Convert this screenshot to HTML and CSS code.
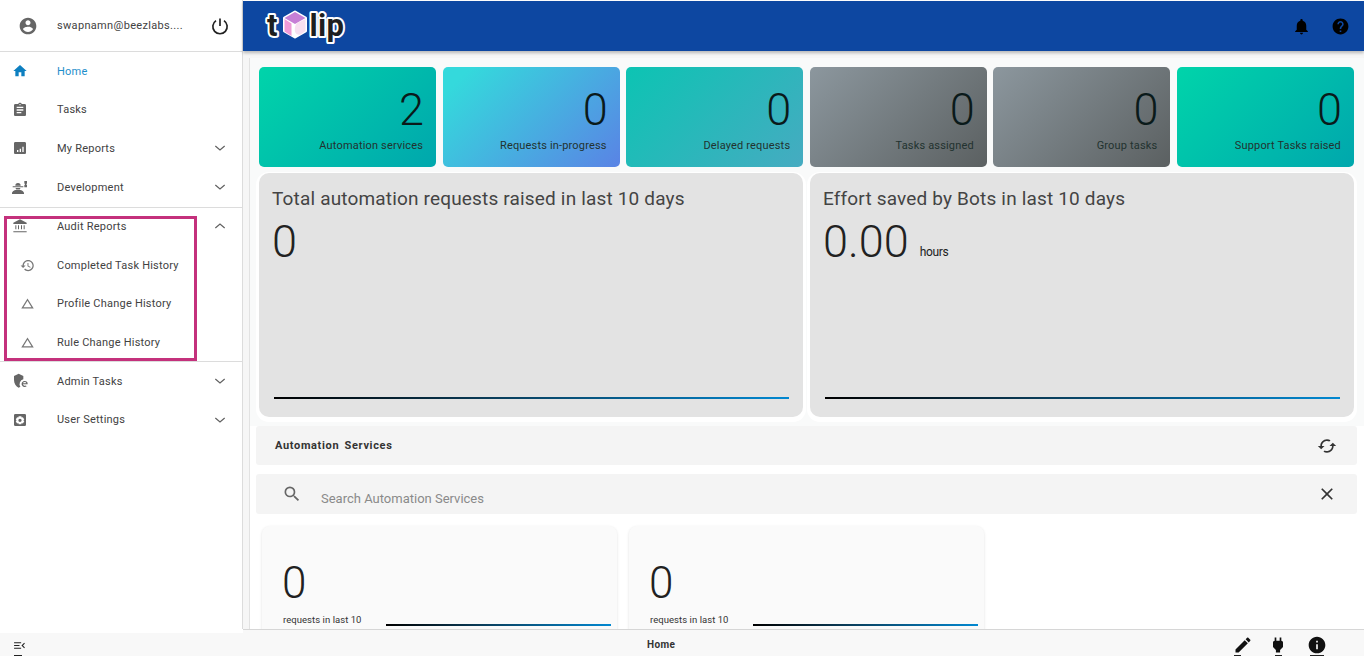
FILE: index.html
```html
<!DOCTYPE html>
<html lang="en">
<head>
<meta charset="utf-8">
<title>Tulip</title>
<link rel="stylesheet" href="styles.css">
</head>
<body>
<div class="app">
  <div class="body-row">
    <aside class="sidebar">
      <div class="user">
        <svg class="ic user-ic" viewBox="0 0 24 24"><path d="M12 2C6.48 2 2 6.48 2 12s4.48 10 10 10 10-4.48 10-10S17.52 2 12 2zm0 3c1.66 0 3 1.34 3 3s-1.34 3-3 3-3-1.34-3-3 1.34-3 3-3zm0 14.2c-2.5 0-4.71-1.28-6-3.22.03-1.99 4-3.08 6-3.08 1.99 0 5.97 1.09 6 3.08-1.29 1.94-3.5 3.22-6 3.22z"/></svg>
        <span class="user-name">swapnamn@beezlabs....</span>
        <svg class="power" viewBox="0 0 24 24"><path d="M12 3v9M7.2 5.6a8.6 8.6 0 1 0 9.6 0"/></svg>
      </div>
      <nav class="group group-main">
        <div class="row active"><svg class="ic" viewBox="0 0 24 24"><path d="M10 20v-6h4v6h5v-8h3L12 3 2 12h3v8z"/></svg><span>Home</span></div>
        <div class="row"><svg class="ic" viewBox="0 0 24 24"><path d="M19 3h-4.18C14.4 1.84 13.3 1 12 1c-1.3 0-2.4.84-2.82 2H5c-1.1 0-2 .9-2 2v14c0 1.1.9 2 2 2h14c1.1 0 2-.9 2-2V5c0-1.1-.9-2-2-2zm-7 0c.55 0 1 .45 1 1s-.45 1-1 1-1-.45-1-1 .45-1 1-1zm2 14H7v-2h7v2zm3-4H7v-2h10v2zm0-4H7V7h10v2z"/></svg><span>Tasks</span></div>
        <div class="row"><svg class="ic" viewBox="0 0 24 24"><path d="M19 3H5c-1.1 0-2 .9-2 2v14c0 1.1.9 2 2 2h14c1.1 0 2-.9 2-2V5c0-1.1-.9-2-2-2zM9.500 18h-2v-3h2v3zm4 0h-2v-5h2v5zm4 0h-2v-8h2v8z"/></svg><span>My Reports</span><svg class="chev" viewBox="0 0 24 24"><path d="M5 9l7 6 7-6"/></svg></div>
        <div class="row"><svg class="ic" viewBox="0 0 24 24"><path fill-rule="evenodd" d="M9 6a4 4 0 0 1 4 4H5a4 4 0 0 1 4-4zM1 11h16v1.500H1zM5.500 13.500h7a3.600 3.600 0 0 1-.6 1.800H6.100a3.600 3.600 0 0 1-.6-1.800zM0 21.500c0-3 4-5.300 9-5.300s9 2.300 9 5.300v1H0zM18.500 3h4v4h-1v1.500h1v4h-4v-4h1V7h-1z"/></svg><span>Development</span><svg class="chev" viewBox="0 0 24 24"><path d="M5 9l7 6 7-6"/></svg></div>
      </nav>
      <nav class="group group-audit">
        <div class="row"><svg class="ic" viewBox="0 0 24 24"><path d="M5 11h1.500v6H5zM9 11h1.500v6H9zM13.500 11H15v6h-1.500zM17.500 11H19v6h-1.500zM2 20h20v1.500H2zM12 2L2 7v2h20V7z"/></svg><span>Audit Reports</span><svg class="chev" viewBox="0 0 24 24"><path d="M5 15l7-6 7 6"/></svg></div>
        <div class="row"><svg class="ic sub" viewBox="0 0 24 24"><path d="M13 3c-4.97 0-9 4.030-9 9H1l3.890 3.890.070.140L9 12H6c0-3.870 3.130-7 7-7s7 3.130 7 7-3.130 7-7 7c-1.930 0-3.680-.790-4.940-2.060l-1.420 1.420C8.270 19.990 10.510 21 13 21c4.970 0 9-4.030 9-9s-4.030-9-9-9zm-1 5v5l4.280 2.540.720-1.210-3.500-2.080V8H12z"/></svg><span>Completed Task History</span></div>
        <div class="row"><svg class="ic sub" viewBox="0 0 24 24"><path d="M12 7.770L18.390 18H5.610L12 7.770M12 4L2 20h20L12 4z"/></svg><span>Profile Change History</span></div>
        <div class="row"><svg class="ic sub" viewBox="0 0 24 24"><path d="M12 7.770L18.390 18H5.610L12 7.770M12 4L2 20h20L12 4z"/></svg><span>Rule Change History</span></div>
      </nav>
      <nav class="group last">
        <div class="row"><svg class="ic" viewBox="0 0 24 24"><path d="M10 1L3 4.500v6c0 5.200 3 9.800 7 11.500 1-.4 1.800-1 2.600-1.700A7 7 0 0 1 17 9.500V4.500z"/><path d="M19 12a4.500 4.500 0 1 0 3 7.800l-1.200-1.200A2.800 2.800 0 0 1 16.400 17h7a4.500 4.500 0 0 0-4.400-5zm-2.600 3.500a2.700 2.700 0 0 1 5.200 0z"/></svg><span>Admin Tasks</span><svg class="chev" viewBox="0 0 24 24"><path d="M5 9l7 6 7-6"/></svg></div>
        <div class="row"><svg class="ic" viewBox="0 0 24 24"><path fill-rule="evenodd" d="M5 3h14a2 2 0 0 1 2 2v14a2 2 0 0 1-2 2H5a2 2 0 0 1-2-2V5a2 2 0 0 1 2-2zm5 3.500l-.5 1.900-1.900-.6-2 3.400 1.400 1.300-1.400 1.300 2 3.400 1.900-.6.500 1.900h4l.5-1.900 1.900.6 2-3.400-1.400-1.300 1.400-1.300-2-3.400-1.900.6-.5-1.900zM12 10a2.500 2.500 0 1 1 0 5 2.500 2.500 0 0 1 0-5z"/></svg><span>User Settings</span><svg class="chev" viewBox="0 0 24 24"><path d="M5 9l7 6 7-6"/></svg></div>
      </nav>
      <div class="highlight"></div>
    </aside>
    <main class="main">
      <header class="topbar">
        <svg class="logo" viewBox="0 0 84 42" role="img" aria-label="tulip">
          <text class="logo-t" x="5" y="31">t</text>
          <path class="logo-hex" d="M33 7l10.500 6v13L33 32l-10.500-6V13z"/>
          <path class="logo-pink" d="M33 7l10.500 6-10.500 6-10.500-6z"/>
          <path class="logo-side" d="M22.500 14l7 4.500V31l-7-4.500z"/>
          <path class="logo-side2" d="M43.500 14v12l-5 3.500c-4 1-6.500-2-5.500-7.500.5-3 2.500-5 5.500-5.500z"/>
          <text class="logo-t logo-lip" x="47.500" y="31">lip</text>
        </svg>
        <div class="top-actions">
          <svg class="tic" viewBox="0 0 24 24"><path d="M12 22c1.100 0 2-.9 2-2h-4c0 1.100.89 2 2 2zm6-6v-5c0-3.070-1.640-5.640-4.500-6.320V4c0-.83-.67-1.500-1.500-1.500s-1.500.67-1.500 1.500v.68C7.630 5.360 6 7.920 6 11v5l-2 2v1h16v-1l-2-2z"/></svg>
          <svg class="tic" viewBox="0 0 24 24"><path d="M12 2C6.480 2 2 6.480 2 12s4.480 10 10 10 10-4.480 10-10S17.520 2 12 2zm1 17h-2v-2h2v2zm2.070-7.750l-.9.920C13.450 12.900 13 13.500 13 15h-2v-.5c0-1.100.45-2.100 1.170-2.830l1.240-1.260c.37-.36.59-.86.59-1.410 0-1.100-.9-2-2-2s-2 .9-2 2H8c0-2.210 1.790-4 4-4s4 1.790 4 4c0 .88-.36 1.680-.93 2.250z"/></svg>
        </div>
      </header>
      <div class="gutter">
        <div class="content">
          <section class="upper">
            <div class="stats">
              <div class="stat s-teal"><div class="stat-num">2</div><div class="stat-label">Automation services</div></div>
              <div class="stat s-blue"><div class="stat-num">0</div><div class="stat-label">Requests in-progress</div></div>
              <div class="stat s-cyan"><div class="stat-num">0</div><div class="stat-label">Delayed requests</div></div>
              <div class="stat s-gray"><div class="stat-num">0</div><div class="stat-label">Tasks assigned</div></div>
              <div class="stat s-gray"><div class="stat-num">0</div><div class="stat-label">Group tasks</div></div>
              <div class="stat s-teal"><div class="stat-num">0</div><div class="stat-label">Support Tasks raised</div></div>
            </div>
            <div class="panels">
              <div class="panel">
                <h2 class="panel-title">Total automation requests raised in last 10 days</h2>
                <div class="panel-num">0</div>
                <div class="spark panel-spark"></div>
              </div>
              <div class="panel">
                <h2 class="panel-title">Effort saved by Bots in last 10 days</h2>
                <div class="panel-num">0.00<span class="unit">hours</span></div>
                <div class="spark panel-spark"></div>
              </div>
            </div>
          </section>
          <div class="bar title-bar">
            <span class="bar-title">Automation Services</span>
            <svg class="sync" viewBox="0 0 24 24"><path transform="rotate(90 12 12)" d="M12 4V1L8 5l4 4V6c3.310 0 6 2.690 6 6 0 1.010-.25 1.970-.7 2.800l1.460 1.460C19.540 15.030 20 13.570 20 12c0-4.420-3.580-8-8-8zm0 14c-3.310 0-6-2.690-6-6 0-1.010.25-1.970.7-2.800L5.240 7.740C4.460 8.970 4 10.430 4 12c0 4.420 3.580 8 8 8v3l4-4-4-4v3z"/></svg>
          </div>
          <div class="bar search-bar">
            <svg class="search-ic" viewBox="0 0 24 24"><path d="M15.500 14h-.79l-.28-.27A6.470 6.470 0 0 0 16 9.500 6.500 6.500 0 1 0 9.500 16c1.610 0 3.090-.59 4.230-1.570l.27.28v.79l5 4.990L20.490 19l-4.990-5zm-6 0C7.010 14 5 11.990 5 9.500S7.010 5 9.500 5 14 7.010 14 9.500 11.990 14 9.500 14z"/></svg>
            <span class="search-text">Search Automation Services</span>
            <svg class="close" viewBox="0 0 24 24"><path d="M19 6.410L17.590 5 12 10.590 6.410 5 5 6.410 10.590 12 5 17.590 6.410 19 12 13.410 17.590 19 19 17.590 13.410 12z"/></svg>
          </div>
          <div class="services">
            <div class="service">
              <div class="service-num">0</div>
              <div class="service-foot"><span>requests in last 10</span><div class="spark"></div></div>
            </div>
            <div class="service">
              <div class="service-num">0</div>
              <div class="service-foot"><span>requests in last 10</span><div class="spark"></div></div>
            </div>
          </div>
        </div>
      </div>
    </main>
  </div>
  <footer class="footer">
    <div class="foot-left">
      <svg class="menu-ic" viewBox="0 0 24 24"><path d="M2 18h13v-2H2v2zm0-5h10v-2H2v2zm0-7v2h13V6H2zm20 9.590L18.420 12 22 8.410 20.590 7l-5 5 5 5L22 15.590z"/></svg>
      <i class="mark mark-menu"></i>
    </div>
    <div class="foot-main">
      <span class="foot-title">Home</span>
      <div class="foot-actions">
        <div class="fitem fitem-edit">
          <svg class="fic" viewBox="0 0 24 24"><path d="M3 17.250V21h3.750L17.810 9.940l-3.750-3.750L3 17.250zM20.710 7.040c.39-.39.39-1.020 0-1.410l-2.340-2.340c-.39-.39-1.020-.39-1.410 0l-1.830 1.830 3.750 3.750 1.830-1.830z"/></svg>
          <i class="mark mark-edit"></i>
        </div>
        <div class="fitem">
          <svg class="fic" viewBox="0 0 24 24"><path d="M16 7V3h-2v4h-4V3H8v4h-.01C7 6.990 6 7.990 6 8.990v5.490L9.500 18v3h5v-3l3.500-3.510v-5.500c0-1-1-2-2-1.990z"/></svg>
          <i class="mark mark-plug"></i>
        </div>
        <div class="fitem">
          <svg class="fic" viewBox="0 0 24 24"><path d="M12 2C6.480 2 2 6.480 2 12s4.480 10 10 10 10-4.480 10-10S17.520 2 12 2zm1 15h-2v-6h2v6zm0-8h-2V7h2v2z"/></svg>
          <i class="mark mark-info"></i>
        </div>
      </div>
    </div>
  </footer>
</div>
</body>
</html>
```
FILE: styles.css
```css
* { box-sizing: border-box; }
html, body { margin: 0; height: 100%; overflow: hidden; }
body { font-family: Roboto, "Liberation Sans", sans-serif; color: #212121; background: #fff; }
.app { height: 656px; display: flex; flex-direction: column; overflow: hidden; }
.body-row { flex: 1; min-height: 0; display: flex; }

.sidebar { width: 243px; flex: none; position: relative; border-right: 1px solid #dcdcdc; background: #fff; }
.user { height: 52px; display: flex; align-items: center; border-bottom: 1px solid #dcdcdc; font-size: 11px; letter-spacing: .32px; color: #424242; }
.ic.user-ic { width: 20px; height: 20px; margin: 0 19px 0 18px; fill: #666; }
.user-name { flex: 1; }
.power { width: 20px; height: 20px; flex: none; margin-right: 12px; fill: none; stroke: #212121; stroke-width: 2; }
.group { border-bottom: 1px solid #dcdcdc; }
.group-main { height: 156px; }
.group-audit { height: 154.900px; margin-top: -.9px; }
.group.last { border-bottom: 0; }
.row { height: 38.600px; display: flex; align-items: center; padding-left: 12px; font-size: 11px; letter-spacing: .22px; color: #424242; }
.row span { flex: 1; }
.ic { width: 16px; height: 16px; flex: none; margin-right: 29px; fill: #666; }
.ic.sub { width: 15px; height: 15px; margin: 0 22px 0 8px; fill: #777; }
.active { color: #1e8ecb; }
.active .ic { fill: #0d7fc0; }
.chev { width: 16px; height: 16px; flex: none; margin-right: 14px; fill: none; stroke: #616161; stroke-width: 1.800; }
.highlight { position: absolute; left: 4px; top: 216px; width: 193px; height: 145px; border: 3px solid #c4317c; pointer-events: none; }

.main { flex: 1; min-width: 0; display: flex; flex-direction: column; }
.topbar { height: 50px; margin-top: 1px; flex: none; display: flex; align-items: center; justify-content: space-between; padding: 0 14px 0 19px; background: #0d47a1; box-shadow: 0 2px 3px rgba(0,0,0,.25); position: relative; }
.logo { width: 84px; height: 42px; display: block; overflow: visible; }
.logo-t { font: 700 31px Roboto, sans-serif; fill: #1e1e1e; stroke: #fff; stroke-width: 4px; stroke-linejoin: round; paint-order: stroke; }
.logo-lip { letter-spacing: .3px; }
.logo-hex { fill: #fff; stroke: #fff; stroke-width: 3px; stroke-linejoin: round; }
.logo-pink { fill: #c77fd6; }
.logo-side { fill: #ef9ad8; }
.logo-side2 { fill: #f7dff0; }
.top-actions { display: flex; gap: 20px; align-items: center; }
.tic { width: 19px; height: 19px; fill: #000; }

.gutter { flex: 1; min-height: 0; background: #f6f6f6; padding: 7px 0 0 6px; }
.content { height: 100%; overflow: hidden; background: #fff; border-left: 1px solid #e2e2e2; padding: 0 7px 0 6px; }
.upper { margin: 0 -7px 0 -6px; padding: 9px 10px 9px 9px; background: #f9fafa; }
.stats { display: grid; grid-template-columns: repeat(6, 1fr); gap: 6.500px; }
.stat { height: 100px; border-radius: 5px; padding: 16px 13px 0; text-align: right; color: #0a1a1a; }
.stat-num { font-size: 45px; font-weight: 300; line-height: 54px; margin-right: -1px; }
.stat-label { font-size: 11px; letter-spacing: .17px; line-height: 14px; margin-top: 2px; color: #22322f; }
.s-teal { background: linear-gradient(135deg, #00d4aa, #00a7ad); }
.s-blue { background: linear-gradient(135deg, #34d9dc 10%, #5a83e5); }
.s-cyan { background: linear-gradient(135deg, #0cc4b3, #46abc1); }
.s-gray { background: linear-gradient(135deg, #8c979e, #5b6061); }
.panels { display: grid; grid-template-columns: 1fr 1fr; gap: 7px; margin-top: 6px; }
.panel { height: 244px; border-radius: 10px; background: #e3e3e3; padding: 14px 13px 0; position: relative; display: flex; flex-direction: column; box-shadow: 0 2px 0 3px #fff; }
.panel-title { margin: 0; font-size: 19px; font-weight: 400; line-height: 24px; letter-spacing: .17px; color: #444; }
.panel-num { font-size: 45px; font-weight: 300; line-height: 56px; margin-top: 3px; }
.unit { font-size: 12px; font-weight: 400; letter-spacing: -.3px; margin-left: 11px; vertical-align: 1px; }
.spark { height: 2px; background: linear-gradient(90deg, #000, #0a3a55 40%, #0288d1); }
.panel-spark { margin: auto 1px 18px 2px; }

.bar { height: 40px; display: flex; align-items: center; background: #f4f4f4; border-radius: 3px; }
.title-bar { height: 39px; padding: 0 20px 0 19px; justify-content: space-between; }
.bar-title { font-size: 11px; font-weight: 700; letter-spacing: .65px; word-spacing: 2px; color: #333; }
.sync { width: 20px; height: 20px; fill: #333; }
.search-bar { margin-top: 9px; padding: 0 20px 0 26px; }
.search-ic { width: 20px; height: 20px; flex: none; fill: #666; }
.search-text { flex: 1; margin: 8px 0 0 19px; font-size: 13px; color: #8a8a8a; }
.close { width: 20px; height: 20px; fill: #333; }
.services { display: flex; gap: 12px; padding: 12px 0 0 6px; }
.service { width: 355px; height: 120px; background: #fafafa; border-radius: 8px; box-shadow: 0 1px 3px rgba(0,0,0,.12); padding: 30px 6px 0 21px; flex: none; }
.service-num { font-size: 44px; font-weight: 300; line-height: 54px; margin-left: -1px; }
.service-foot { display: flex; align-items: flex-end; font-size: 9.500px; letter-spacing: .05px; color: #333; margin-top: 4px; }
.service-foot span { width: 103px; flex: none; line-height: 12px; }
.service-foot .spark { flex: 1; }

.footer { height: 27px; flex: none; display: flex; overflow: hidden; }
.foot-left { width: 243px; flex: none; margin-top: 4px; background: #f8f8f8; padding: 6px 0 0 13px; }
.menu-ic { width: 13px; height: 13px; display: block; fill: #222; }
.foot-main { flex: 1; display: flex; align-items: flex-start; background: #f8f8f8; border-top: 1px solid #d6d6d6; padding: 5px 0 0 404px; }
.foot-title { font-size: 10px; font-weight: 700; letter-spacing: .4px; line-height: 20px; color: #333; margin-right: auto; }
.foot-actions { display: flex; gap: 19px; margin-right: 37px; }
.fitem { display: flex; flex-direction: column; align-items: center; }
.fitem-edit { margin-right: -3.500px; }
.fic { width: 20px; height: 20px; display: block; fill: #111; }
.mark { display: block; height: 2px; background: #222; }
.mark-menu { width: 8px; margin: 3px 0 0 1px; }
.mark-edit { width: 7px; margin-right: 10px; }
.mark-plug { width: 7px; }
.mark-info { width: 14px; }
```
